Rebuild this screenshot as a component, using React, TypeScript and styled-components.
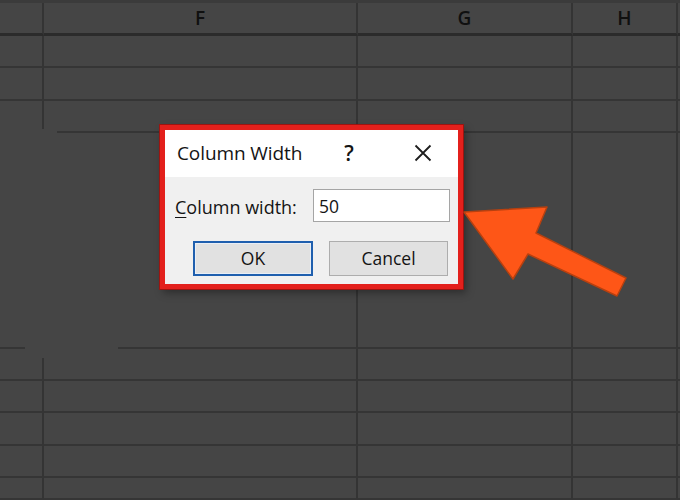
import React from "react";
import styled, { createGlobalStyle } from "styled-components";

const Global = createGlobalStyle`
  html, body { margin: 0; padding: 0; background: #454545; }
  body { width: 680px; height: 500px; overflow: hidden; font-family: "Open Sans", "Noto Sans", sans-serif; }
  * { box-sizing: border-box; }
`;

const Page = styled.div`
  position: relative;
  width: 680px;
  height: 500px;
  overflow: hidden;
  background: #454545;
`;

const Sheet = styled.div`
  display: grid;
  grid-template-columns: 44px 314px 215px 105px 1fr;
  grid-template-rows: 33px 32px 33px 32px 216px 32px 32px 33px 32px 1fr;
  width: 680px;
  height: 500px;
  border-top: 3px solid #3b3b3b;
  background: #454545;
`;

const Cell = styled.div<{ $header?: boolean; $lastCol?: boolean }>`
  border-right: ${(p) => (p.$lastCol ? "none" : "2px solid #343434")};
  border-bottom: ${(p) => (p.$header ? "3px solid #2b2b2b" : "2px solid #353535")};
  display: flex;
  align-items: center;
  justify-content: center;
  color: #101010;
  font-size: 19px;
  font-weight: 600;
  font-family: "Open Sans", "Noto Sans", sans-serif;
  padding-bottom: 1px;
`;

const Patch = styled.div<{ $x: number; $y: number; $w: number; $h: number }>`
  position: absolute;
  left: ${(p) => p.$x}px;
  top: ${(p) => p.$y}px;
  width: ${(p) => p.$w}px;
  height: ${(p) => p.$h}px;
  background: #454545;
`;

const Dialog = styled.div`
  position: absolute;
  left: 160px;
  top: 125px;
  width: 303px;
  height: 164px;
  border: 5px solid #e3201c;
  box-shadow: 0 0 0 1px #9c1410, 3px 4px 8px rgba(0, 0, 0, 0.35);
  display: flex;
  flex-direction: column;
  font-family: "Open Sans", "Noto Sans", sans-serif;
  color: #141414;
`;

const TitleBar = styled.div`
  height: 47px;
  background: #ffffff;
  display: flex;
  align-items: center;
  padding-left: 12px;
  padding-bottom: 2px;
`;

const Title = styled.div`
  font-size: 19px;
  flex: 1;
  letter-spacing: -0.1px;
`;

const Help = styled.div`
  font-size: 21px;
  font-weight: 600;
  width: 20px;
  text-align: center;
  margin-right: 54px;
`;

const CloseBtn = styled.div`
  width: 20px;
  height: 20px;
  margin-right: 25px;
  display: flex;
  align-items: center;
  justify-content: center;
`;

const Body = styled.div`
  flex: 1;
  background: #f0f0f0;
  display: flex;
  flex-direction: column;
  padding: 12px 8px 8px 10px;
`;

const FieldRow = styled.div`
  display: flex;
  align-items: center;
  justify-content: space-between;
  height: 33px;
`;

const Label = styled.label`
  font-size: 18px;
  padding-top: 2px;
  u { text-decoration-thickness: 1px; text-underline-offset: 3px; }
`;

const Input = styled.div`
  width: 137px;
  height: 33px;
  background: #ffffff;
  border: 1px solid #a5a5a5;
  display: flex;
  align-items: center;
  padding-left: 5px;
  font-size: 17.5px;
`;

const Buttons = styled.div`
  display: flex;
  justify-content: flex-end;
  gap: 16px;
  margin-top: 19px;
  padding-right: 2px;
`;

const Button = styled.div<{ $default?: boolean }>`
  width: ${(p) => (p.$default ? "120px" : "119px")};
  height: 35px;
  background: #e1e1e1;
  border: ${(p) => (p.$default ? "2px solid #1f5fae" : "1px solid #adadad")};
  box-shadow: ${(p) => (p.$default ? "inset 0 0 0 1px #e8eef6" : "none")};
  display: flex;
  align-items: center;
  justify-content: center;
  font-size: 17.5px;
  padding-bottom: 1px;
`;

const ArrowSvg = styled.svg`
  position: absolute;
  left: 0;
  top: 0;
  pointer-events: none;
`;

const cols = 5;
const rows = 10;
const headers = ["", "F", "G", "H", ""];

export default function App() {
  const cells: React.ReactNode[] = [];
  for (let r = 0; r < rows; r++) {
    for (let c = 0; c < cols; c++) {
      cells.push(
        <Cell key={`${r}-${c}`} $header={r === 0} $lastCol={c === cols - 1}>
          {r === 0 ? headers[c] : null}
        </Cell>
      );
    }
  }
  return (
    <Page>
      <Global />
      <Sheet>{cells}</Sheet>
      <Patch $x={0} $y={129} $w={57} $h={7} />
      <Patch $x={30} $y={132} $w={24} $h={226} />
      <Patch $x={25} $y={345} $w={93} $h={8} />
      <Dialog>
        <TitleBar>
          <Title>Column Width</Title>
          <Help>?</Help>
          <CloseBtn>
            <svg width="18" height="18" viewBox="0 0 18 18">
              <path d="M1.5 1.5 L16.5 16.5 M16.5 1.5 L1.5 16.5" stroke="#1e1e1e" strokeWidth="1.8" fill="none" />
            </svg>
          </CloseBtn>
        </TitleBar>
        <Body>
          <FieldRow>
            <Label>
              <u>C</u>olumn width:
            </Label>
            <Input>50</Input>
          </FieldRow>
          <Buttons>
            <Button $default>OK</Button>
            <Button>Cancel</Button>
          </Buttons>
        </Body>
      </Dialog>
      <ArrowSvg width="680" height="500" viewBox="0 0 680 500">
        <polygon
          points="464,212 547,207 536,233 626,278 617,296 528,254 513,279"
          fill="#fe5617"
          stroke="#b8400f"
          strokeWidth="1.5"
          strokeLinejoin="round"
        />
      </ArrowSvg>
    </Page>
  );
}
